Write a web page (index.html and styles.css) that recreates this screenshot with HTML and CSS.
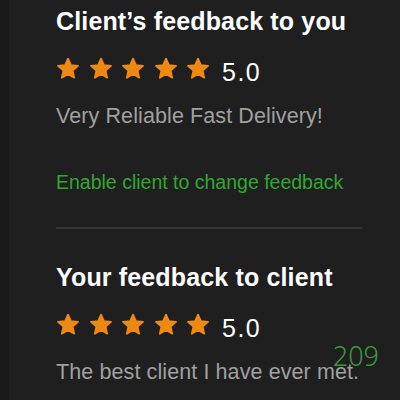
FILE: index.html
```html
<!DOCTYPE html>
<html lang="en">
<head>
    <meta charset="UTF-8">
    <meta name="viewport" content="width=device-width, initial-scale=1.0">
    <title>Feedback</title>
    <link rel="stylesheet" href="styles.css">
</head>
<body>
    <svg width="0" height="0" class="defs">
        <defs>
            <symbol id="star" viewBox="0 0 24 24">
                <path d="M12 1.6 L14.9 8.2 L22 8.9 L16.6 13.6 L18.2 20.7 L12 17 L5.8 20.7 L7.4 13.6 L2 8.9 L9.1 8.2 Z"
                      fill="currentColor" stroke="currentColor" stroke-width="1.8" stroke-linejoin="round"/>
            </symbol>
        </defs>
    </svg>

    <div class="page">
        <div class="feedback-list">
            <section class="feedback">
                <h2 class="feedback-title">Client’s feedback to you</h2>
                <div class="rating">
                    <div class="stars">
                        <svg class="star"><use href="#star"/></svg>
                        <svg class="star"><use href="#star"/></svg>
                        <svg class="star"><use href="#star"/></svg>
                        <svg class="star"><use href="#star"/></svg>
                        <svg class="star"><use href="#star"/></svg>
                    </div>
                    <span class="rating-value">5.0</span>
                </div>
                <p class="feedback-text">Very Reliable Fast Delivery!</p>
                <a href="#" class="feedback-action">Enable client to change feedback</a>
            </section>

            <hr class="divider">

            <section class="feedback feedback-own">
                <h2 class="feedback-title">Your feedback to client</h2>
                <div class="rating">
                    <div class="stars">
                        <svg class="star"><use href="#star"/></svg>
                        <svg class="star"><use href="#star"/></svg>
                        <svg class="star"><use href="#star"/></svg>
                        <svg class="star"><use href="#star"/></svg>
                        <svg class="star"><use href="#star"/></svg>
                    </div>
                    <span class="rating-value">5.0</span>
                </div>
                <p class="feedback-text">The best client I have ever met.</p>
                <span class="counter">209</span>
            </section>
        </div>
    </div>
</body>
</html>
```

FILE: styles.css
```css
* {
    margin: 0;
    padding: 0;
    box-sizing: border-box;
}

html,
body {
    width: 100%;
    height: 100%;
    overflow: hidden;
}

body {
    font-family: 'Liberation Sans', Arial, sans-serif;
    background: #1a1a1a;
    color: #ffffff;
}

.defs {
    position: absolute;
    width: 0;
    height: 0;
}

.page {
    height: 100%;
    margin-left: 9px;
    background: #1f1f1f;
    padding: 6px 38px 0 47px;
}

.feedback {
    display: flex;
    flex-direction: column;
    align-items: flex-start;
}

.feedback-own {
    position: relative;
}

.feedback-title {
    font-size: 25px;
    line-height: 30px;
    font-weight: 700;
    letter-spacing: 0.15px;
    color: #ffffff;
}

.rating {
    display: flex;
    align-items: center;
    gap: 12px;
    height: 24px;
    margin-top: 21px;
}

.stars {
    display: flex;
    gap: 8.5px;
}

.star {
    width: 24px;
    height: 24px;
    color: #ee8a12;
}

/* sits a little lower than the star centres */
.rating-value {
    font-size: 25px;
    line-height: 24px;
    letter-spacing: 1.5px;
    color: #ffffff;
    transform: translateY(3px);
}

.feedback-text {
    margin-top: 23px;
    font-size: 21.5px;
    line-height: 24px;
    letter-spacing: 0.1px;
    color: #a0a0a0;
}

.feedback-action {
    margin-top: 42px;
    font-size: 19.5px;
    line-height: 24px;
    color: #2fa82f;
    text-decoration: none;
}

.divider {
    border: none;
    height: 2px;
    background: #333333;
    margin-top: 33px;
    margin-bottom: 33px;
}

.counter {
    position: absolute;
    right: -17px;
    top: 80px;
    font-family: 'Noto Sans', sans-serif;
    font-weight: 300;
    font-size: 27px;
    line-height: 27px;
    color: #3b9a3b;
}
```
